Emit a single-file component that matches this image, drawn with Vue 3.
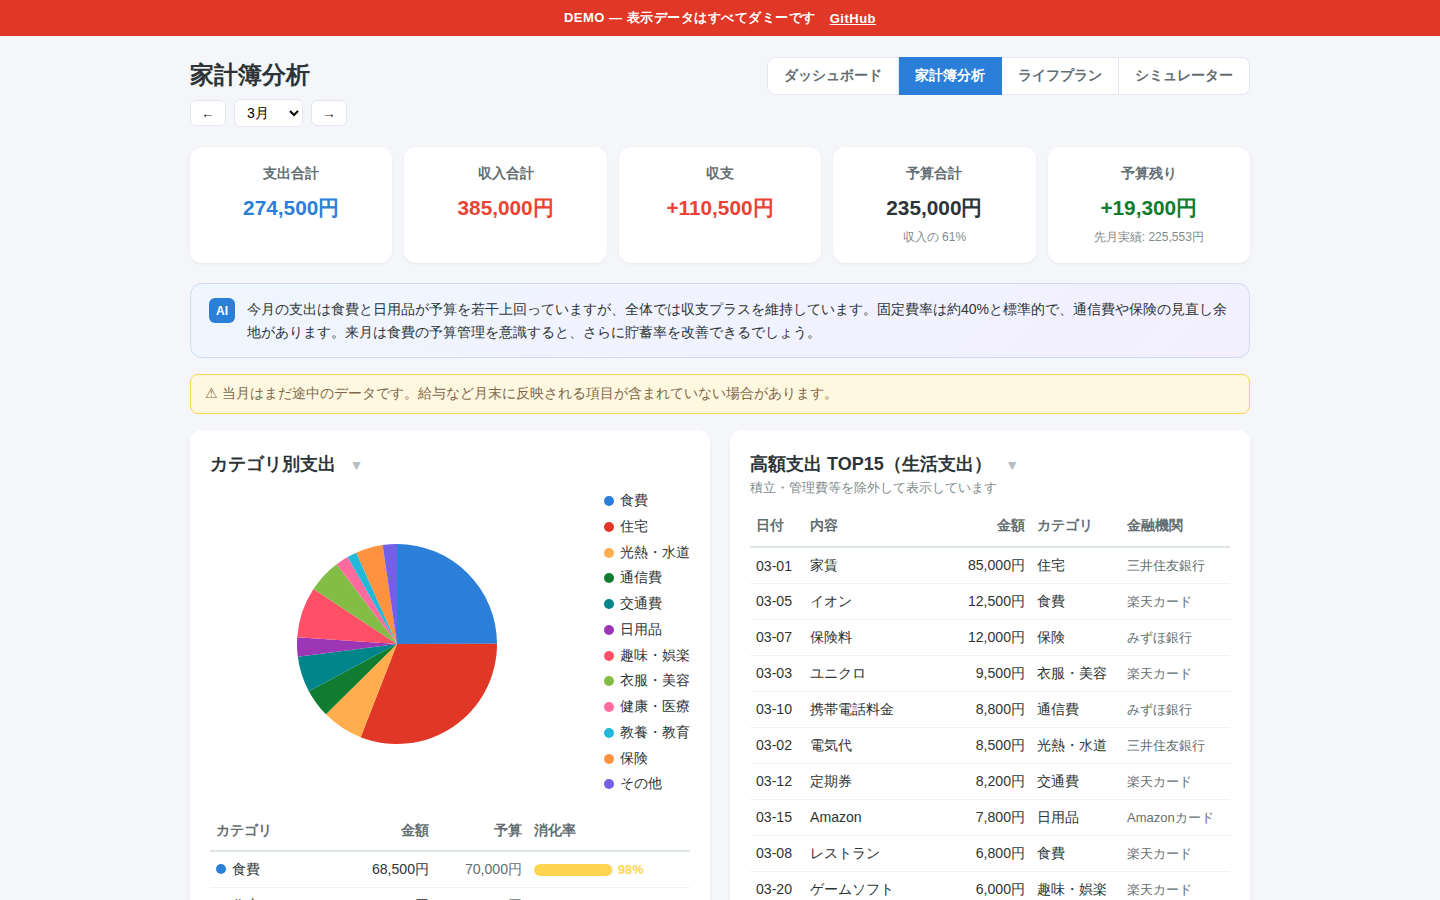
<template>
  <div class="page">
    <div class="banner">
      DEMO — 表示データはすべてダミーです
      <a href="#" class="banner-link">GitHub</a>
    </div>

    <main class="container">
      <header class="head">
        <div>
          <h1 class="title">家計簿分析</h1>
          <div class="month-nav">
            <button class="nav-btn">←</button>
            <select class="month-select">
              <option>3月</option>
            </select>
            <button class="nav-btn">→</button>
          </div>
        </div>
        <nav class="tabs">
          <a v-for="t in tabs" :key="t" class="tab" :class="{ active: t === '家計簿分析' }">{{ t }}</a>
        </nav>
      </header>

      <section class="summary">
        <div v-for="c in summary" :key="c.label" class="summary-card">
          <div class="summary-label">{{ c.label }}</div>
          <div class="summary-value" :class="c.tone">{{ c.value }}</div>
          <div v-if="c.sub" class="summary-sub">{{ c.sub }}</div>
        </div>
      </section>

      <section class="ai-box">
        <span class="ai-badge">AI</span>
        <p class="ai-text">今月の支出は食費と日用品が予算を若干上回っていますが、全体では収支プラスを維持しています。固定費率は約40%と標準的で、通信費や保険の見直し余地があります。来月は食費の予算管理を意識すると、さらに貯蓄率を改善できるでしょう。</p>
      </section>

      <section class="warn-box">⚠ 当月はまだ途中のデータです。給与など月末に反映される項目が含まれていない場合があります。</section>

      <div class="panels">
        <section class="panel">
          <h2 class="panel-title">カテゴリ別支出<span class="caret">▼</span></h2>
          <div class="chart-row">
            <div class="pie-wrap">
              <svg width="200" height="200" viewBox="-100 -100 200 200">
                <path v-for="s in slices" :key="s.name" :d="s.d" :fill="s.color" />
              </svg>
            </div>
            <ul class="legend">
              <li v-for="c in categories" :key="c.name" class="legend-item">
                <span class="dot" :style="{ background: c.color }"></span>{{ c.name }}
              </li>
            </ul>
          </div>
          <table class="table cat-table">
            <thead>
              <tr>
                <th>カテゴリ</th>
                <th class="num c-value">金額</th>
                <th class="num c-budget">予算</th>
                <th class="c-rate">消化率</th>
              </tr>
            </thead>
            <tbody>
              <tr v-for="c in categories" :key="c.name">
                <td><span class="dot cat-dot" :style="{ background: c.color }"></span>{{ c.name }}</td>
                <td class="num">{{ yen(c.value) }}</td>
                <td class="num muted">{{ yen(c.budget) }}</td>
                <td>
                  <div class="rate">
                    <div class="rate-track">
                      <div class="rate-bar" :style="{ width: Math.min(ratio(c), 100) + '%', background: rateColor(c) }"></div>
                    </div>
                    <span class="rate-text" :style="{ color: rateColor(c) }">{{ ratio(c) }}%</span>
                  </div>
                </td>
              </tr>
            </tbody>
          </table>
        </section>

        <section class="panel">
          <h2 class="panel-title top-title">高額支出 TOP15（生活支出）<span class="caret">▼</span></h2>
          <p class="panel-note">積立・管理費等を除外して表示しています</p>
          <table class="table top-table">
            <thead>
              <tr>
                <th class="c-date">日付</th>
                <th>内容</th>
                <th class="num c-amount">金額</th>
                <th class="c-cat">カテゴリ</th>
                <th class="c-bank">金融機関</th>
              </tr>
            </thead>
            <tbody>
              <tr v-for="r in topRows" :key="r[0]">
                <td>{{ r[0] }}</td>
                <td>{{ r[1] }}</td>
                <td class="num">{{ yen(r[2]) }}</td>
                <td>{{ r[3] }}</td>
                <td class="bank">{{ r[4] }}</td>
              </tr>
            </tbody>
          </table>
        </section>
      </div>
    </main>
  </div>
</template>

<script setup>
const tabs = ['ダッシュボード', '家計簿分析', 'ライフプラン', 'シミュレーター']

const summary = [
  { label: '支出合計', value: '274,500円', tone: 'blue' },
  { label: '収入合計', value: '385,000円', tone: 'red' },
  { label: '収支', value: '+110,500円', tone: 'red' },
  { label: '予算合計', value: '235,000円', tone: 'dark', sub: '収入の 61%' },
  { label: '予算残り', value: '+19,300円', tone: 'green', sub: '先月実績: 225,553円' }
]

const categories = [
  { name: '食費', value: 68500, budget: 70000, color: '#2b7fd9' },
  { name: '住宅', value: 85000, budget: 85000, color: '#e03726' },
  { name: '光熱・水道', value: 18300, budget: 20000, color: '#ffad4d' },
  { name: '通信費', value: 12600, budget: 15000, color: '#107c2f' },
  { name: '交通費', value: 15900, budget: 15000, color: '#00868a' },
  { name: '日用品', value: 8500, budget: 8000, color: '#9c36b5' },
  { name: '趣味・娯楽', value: 22500, budget: 20000, color: '#ff5068' },
  { name: '衣服・美容', value: 14900, budget: 10000, color: '#82bd46' },
  { name: '健康・医療', value: 5700, budget: 5000, color: '#ff6b9d' },
  { name: '教養・教育', value: 4300, budget: 5000, color: '#22b8d9' },
  { name: '保険', value: 12000, budget: 12000, color: '#ff9240' },
  { name: 'その他', value: 6300, budget: 5000, color: '#7260e6' }
]

const topRows = [
  ['03-01', '家賃', 85000, '住宅', '三井住友銀行'],
  ['03-05', 'イオン', 12500, '食費', '楽天カード'],
  ['03-07', '保険料', 12000, '保険', 'みずほ銀行'],
  ['03-03', 'ユニクロ', 9500, '衣服・美容', '楽天カード'],
  ['03-10', '携帯電話料金', 8800, '通信費', 'みずほ銀行'],
  ['03-02', '電気代', 8500, '光熱・水道', '三井住友銀行'],
  ['03-12', '定期券', 8200, '交通費', '楽天カード'],
  ['03-15', 'Amazon', 7800, '日用品', 'Amazonカード'],
  ['03-08', 'レストラン', 6800, '食費', '楽天カード'],
  ['03-20', 'ゲームソフト', 6000, '趣味・娯楽', '楽天カード'],
  ['03-18', 'ガス代', 5800, '光熱・水道', '三井住友銀行'],
  ['03-22', '病院', 5200, '健康・医療', 'みずほ銀行'],
  ['03-14', '美容院', 5000, '衣服・美容', '楽天カード'],
  ['03-25', '映画', 4500, '趣味・娯楽', '楽天カード'],
  ['03-17', '書籍', 4300, '教養・教育', 'Amazonカード']
]

const yen = (n) => n.toLocaleString('en-US') + '円'
const ratio = (c) => Math.round((c.value / c.budget) * 100)
const rateColor = (c) => {
  const r = ratio(c)
  if (r > 100) return '#e03726'
  if (r >= 90) return '#ffd54f'
  return '#2ea44f'
}

const total = categories.reduce((sum, c) => sum + c.value, 0)
let acc = 0
const slices = categories.map((c) => {
  const a0 = (acc / total) * Math.PI * 2
  acc += c.value
  const a1 = (acc / total) * Math.PI * 2
  const large = a1 - a0 > Math.PI ? 1 : 0
  const x0 = (100 * Math.sin(a0)).toFixed(2)
  const y0 = (-100 * Math.cos(a0)).toFixed(2)
  const x1 = (100 * Math.sin(a1)).toFixed(2)
  const y1 = (-100 * Math.cos(a1)).toFixed(2)
  return { name: c.name, color: c.color, d: `M0 0L${x0} ${y0}A100 100 0 ${large} 1 ${x1} ${y1}Z` }
})
</script>

<style scoped>
.page {
  min-height: 100vh;
  background: #f4f6fa;
  color: #2d3436;
  font-family: "Liberation Sans", sans-serif;
}

.banner {
  height: 36px;
  display: flex;
  align-items: center;
  justify-content: center;
  gap: 14px;
  background: #e03726;
  color: #fff;
  font-size: 13px;
  font-weight: 600;
  letter-spacing: 0.5px;
}

.banner-link {
  color: #fff;
  text-decoration: underline;
}

.container {
  width: 1060px;
  margin: 0 auto;
  padding: 21px 0 40px;
}

.head {
  display: flex;
  justify-content: space-between;
  align-items: flex-start;
  margin-bottom: 20px;
}

.title {
  margin: 0 0 6px;
  font-size: 24px;
  line-height: 36px;
  font-weight: 700;
}

.month-nav {
  display: flex;
  align-items: center;
  gap: 8px;
}

.nav-btn {
  height: 26px;
  padding: 0 10px;
  background: #fff;
  border: 1px solid #e3e7ed;
  border-radius: 6px;
  font-family: inherit;
  font-size: 14px;
  color: #2d3436;
}

.month-select {
  width: 69px;
  height: 28px;
  padding: 0 8px;
  background: #fff;
  border: 1px solid #e3e7ed;
  border-radius: 6px;
  font-family: inherit;
  font-size: 14px;
  color: #000;
}

.tabs {
  display: flex;
  height: 38px;
  border-radius: 8px;
  overflow: hidden;
}

.tab {
  display: flex;
  align-items: center;
  padding: 0 16px;
  background: #fff;
  font-size: 14px;
  font-weight: 600;
  color: #636e72;
  border: 1px solid #e3e7ed;
  border-left: 0;
}

.tab:first-child {
  border-left: 1px solid #e3e7ed;
  border-radius: 8px 0 0 8px;
}

.tab:last-child {
  border-radius: 0 8px 8px 0;
}

.tab.active {
  background: #2b7fd9;
  border-color: #2b7fd9;
  color: #fff;
}

.summary {
  display: grid;
  grid-template-columns: repeat(5, 1fr);
  gap: 12px;
  margin-bottom: 20px;
}

.summary-card {
  height: 116px;
  padding: 16px;
  box-sizing: border-box;
  background: #fff;
  border-radius: 12px;
  box-shadow: 0 1px 3px rgba(0, 0, 0, 0.06);
  text-align: center;
}

.summary-label {
  font-size: 14px;
  line-height: 20px;
  font-weight: 600;
  color: #636e72;
  margin-bottom: 8px;
}

.summary-value {
  font-size: 20.8px;
  line-height: 33px;
  font-weight: 700;
}

.summary-value.blue { color: #2b7fd9; }
.summary-value.red { color: #ea4335; }
.summary-value.dark { color: #2d3436; }
.summary-value.green { color: #107c2f; }

.summary-sub {
  margin-top: 4px;
  font-size: 12px;
  line-height: 18px;
  color: #7f8c8d;
}

.ai-box {
  display: flex;
  gap: 12px;
  padding: 14px 18px 13px;
  margin-bottom: 16px;
  border: 1px solid #d0d9f5;
  border-radius: 12px;
  background: linear-gradient(135deg, #eff6ff, #f3efff);
}

.ai-badge {
  flex: none;
  width: 26px;
  height: 25px;
  display: flex;
  align-items: center;
  justify-content: center;
  background: #2b7fd9;
  color: #fff;
  font-size: 12px;
  font-weight: 700;
  border-radius: 6px;
}

.ai-text {
  margin: 0;
  font-size: 14px;
  line-height: 23.1px;
  color: #2d3436;
}

.warn-box {
  padding: 8px 14px 10px;
  margin-bottom: 16px;
  background: #fff8e1;
  border: 1px solid #ffd54f;
  border-radius: 8px;
  font-size: 14px;
  line-height: 20px;
  color: #80674a;
}

.panels {
  display: grid;
  grid-template-columns: 1fr 1fr;
  gap: 20px;
}

.panel {
  padding: 20px;
  background: #fff;
  border-radius: 12px;
  box-shadow: 0 1px 3px rgba(0, 0, 0, 0.06);
}

.panel-title {
  margin: 0;
  padding-top: 2px;
  font-size: 18px;
  line-height: 25px;
  font-weight: 700;
}

.caret {
  margin-left: 13.5px;
  font-size: 14px;
  font-weight: 400;
  color: #b2bec3;
}

.panel-note {
  margin: 0 0 7px;
  font-size: 13px;
  line-height: 20px;
  color: #7f8c8d;
}

.chart-row {
  display: flex;
  align-items: center;
  gap: 20px;
  height: 320px;
  margin: 5px 0 8px;
}

.pie-wrap {
  flex: 1;
  display: flex;
  justify-content: center;
  padding-top: 2px;
}

.legend {
  margin: 0;
  padding: 0 0 1px;
  list-style: none;
}

.legend-item {
  display: flex;
  align-items: center;
  gap: 6px;
  font-size: 14px;
  line-height: 25.75px;
  color: #2d3436;
  white-space: nowrap;
}

.dot {
  display: inline-block;
  flex: none;
  width: 10px;
  height: 10px;
  border-radius: 50%;
}

.cat-dot {
  margin-right: 6px;
}

.table {
  width: 100%;
  border-collapse: collapse;
  table-layout: fixed;
  font-size: 14px;
}

.table th {
  padding: 0 6px;
  height: 42px;
  box-sizing: border-box;
  text-align: left;
  font-weight: 600;
  color: #636e72;
  border-bottom: 2px solid #dfe6e9;
}

.cat-table th {
  height: 40px;
}

.table td {
  height: 36px;
  padding: 0 6px;
  box-sizing: border-box;
  font-size: 14.1px;
  border-bottom: 1px solid #f0f2f5;
  white-space: nowrap;
}

.table tbody tr:first-child td,
.cat-table tbody td {
  padding-top: 1px;
}

.table .num {
  text-align: right;
}

.muted {
  color: #636e72;
}

.c-value { width: 92px; }
.c-budget { width: 93px; }
.c-rate { width: 162px; }

.rate {
  display: flex;
  align-items: center;
  gap: 4px;
}

.rate-track {
  width: 80px;
  height: 12px;
  border-radius: 6px;
  background: #f0f2f5;
  overflow: hidden;
}

.rate-bar {
  height: 100%;
  border-radius: 6px;
}

.rate-text {
  font-size: 12.8px;
  font-weight: 600;
}

.c-date { width: 54px; }
.c-amount { width: 110px; }
.c-cat { width: 90px; }
.c-bank { width: 109px; }

.table .bank {
  padding-top: 2px;
  font-size: 13px;
  color: #636e72;
}
</style>

<style>
body {
  margin: 0;
}
</style>
